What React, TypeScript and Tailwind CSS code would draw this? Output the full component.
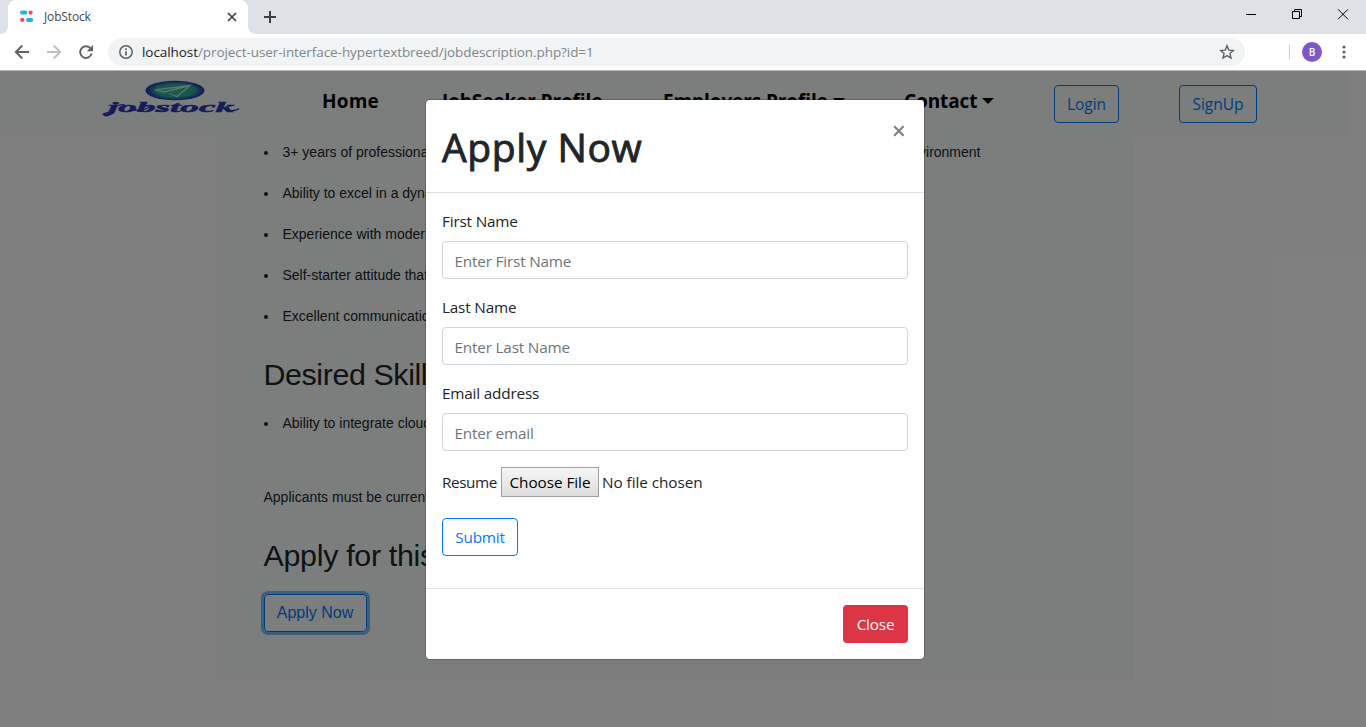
import React from "react";

const ui = "font-['Open_Sans','Noto_Sans',sans-serif]";

function TabStrip() {
  return (
    <div className="flex h-[34px] shrink-0 items-end bg-[#dee1e6]">
      <div className="h-[34px] w-2 bg-white">
        <div className="h-full w-full rounded-br-lg bg-[#dee1e6]" />
      </div>
      <div className="flex h-[34px] w-[240px] items-center rounded-t-lg bg-white pr-[10px] pl-3">
        <svg width="14" height="14" viewBox="0 0 14 14" className="mb-[3px]">
          <rect x="0" y="1.6" width="7.2" height="4" rx="1.8" fill="#17b8e8" />
          <circle cx="10.6" cy="3.6" r="2.1" fill="#ff4646" />
          <circle cx="2.3" cy="10.9" r="2.1" fill="#ff4646" />
          <rect x="6" y="8.9" width="7.2" height="4" rx="1.8" fill="#17b8e8" />
        </svg>
        <span className="ml-[10px] text-[12px] leading-4 tracking-[-0.15px] text-[#45494d]">JobStock</span>
        <svg width="12" height="12" viewBox="0 0 12 12" className="ml-auto" stroke="#3c4043" strokeWidth="1.7">
          <path d="M2 2l8 8M10 2l-8 8" />
        </svg>
      </div>
      <div className="h-[34px] w-2 bg-white">
        <div className="h-full w-full rounded-bl-lg bg-[#dee1e6]" />
      </div>
      <svg width="14" height="34" viewBox="0 0 14 34" className="ml-[7px]" stroke="#3c4043" strokeWidth="2">
        <path d="M1 17h12M7 11v12" />
      </svg>
      <svg width="104" height="34" viewBox="0 0 104 34" className="mr-[16px] ml-auto" fill="none" stroke="#000" strokeWidth="1">
        <path d="M0 14.5h10M46.5 11.5h7v7h-7zM48.5 11V9.5h7v7H54" />
        <path d="M92 9.3l10 10M102 9.3l-10 10" />
      </svg>
    </div>
  );
}

function Toolbar() {
  return (
    <div className="flex h-[37px] shrink-0 items-center border-b border-[#b5b4b4] bg-white pl-[14px]">
      <svg width="80" height="16" viewBox="0 0 80 16" fill="none" strokeWidth="1.9">
        <path d="M15 8H2M8.3 1.5L1.8 8l6.5 6.5" stroke="#5f6368" />
        <path d="M33 8h13M39.7 1.5L46.2 8l-6.5 6.5" stroke="#bdc1c6" />
        <path d="M76.3 4.2A5.8 5.8 0 1 0 77.6 9.6" stroke="#5f6368" />
        <path d="M79 1v6.2h-6.2z" fill="#5f6368" />
      </svg>
      <div className="ml-[14px] flex h-7 w-[1137px] items-center rounded-full bg-[#f1f3f4] pr-[10px] pl-[11px]">
        <svg width="14" height="14" viewBox="0 0 14 14" fill="none" stroke="#5f6368" strokeWidth="1.5">
          <circle cx="7" cy="7" r="6.2" />
          <path d="M7 6.2v4.3M7 3.3v1.6" strokeWidth="1.7" />
        </svg>
        <span className="ml-[9px] text-[13.5px] leading-5 tracking-[-0.07px] whitespace-pre text-[#80868b]">
          <span className="text-[#202124]">localhost</span>/project-user-interface-hypertextbreed/jobdescription.php?id=1
        </span>
        <svg width="16" height="16" viewBox="0 0 24 24" className="ml-auto" fill="none" stroke="#5f6368" strokeWidth="2.1">
          <path d="M12 2.8l2.7 6.4 6.9.6-5.2 4.5 1.6 6.8-6-3.6-6 3.6 1.6-6.8-5.2-4.5 6.9-.6z" />
        </svg>
      </div>
      <div className="ml-[44px] h-4 w-px bg-[#cfd1d4]" />
      <div className="ml-[12px] flex h-5 w-5 items-center justify-center rounded-full bg-[#7e57c2] text-[10px] font-semibold text-white">B</div>
      <svg width="4" height="14" viewBox="0 0 4 14" className="ml-[20px]" fill="#5f6368">
        <circle cx="2" cy="2" r="1.6" /><circle cx="2" cy="7" r="1.6" /><circle cx="2" cy="12" r="1.6" />
      </svg>
    </div>
  );
}

function Logo() {
  return (
    <svg width="140" height="42" viewBox="0 0 140 42" className="mr-[80px] mb-[6px] ml-[102px]">
      <defs>
        <radialGradient id="badge">
          <stop offset="0" stopColor="#38c090" />
          <stop offset="0.68" stopColor="#28a898" />
          <stop offset="0.88" stopColor="#2c50b0" />
          <stop offset="1" stopColor="#2834a8" />
        </radialGradient>
      </defs>
      <ellipse cx="73" cy="10.500" rx="29.5" ry="9.8" fill="url(#badge)" />
      <path d="M53 9.8L88 5.500 75 16.500l-7.500-3M88 5.500L62 12 53 9.800M67.500 13.500L75 16.500" fill="none" stroke="#c4e4dc" strokeWidth="1.3" />
      <text x="6" y="31.500" textLength="126" lengthAdjust="spacingAndGlyphs" fill="#2c38b4" stroke="#2c38b4" strokeWidth=".5" className="font-['Liberation_Serif',serif] text-[15px] italic">jobstock</text>
      <path d="M8 32q-6 1-6 3 2 1.800 7-.8M15 26q5-2 8-1M32 30q9 1.500 15-3M54 30.500q7 .5 12-2.500M127 30.500q6 1 10-2" fill="none" stroke="#2c38b4" strokeWidth="1.300" />
    </svg>
  );
}

function Caret() {
  return <span className="mt-[-1px] ml-[5px] h-0 w-0 border-x-[6px] border-t-[6px] border-x-transparent border-t-black" />;
}

function Navbar() {
  return (
    <nav className="flex h-[66px] w-[1349px] shrink-0 items-center bg-[#f8fcfa] text-[19px] leading-[30px] font-bold whitespace-nowrap text-black">
      <Logo />
      <span className="mb-[6px] w-[120px] tracking-[0.2px]">Home</span>
      <span className="mb-[6px] w-[221px] tracking-[-0.1px]">JobSeeker Profile</span>
      <span className="mb-[6px] flex w-[241px] items-center tracking-[-0.1px]">Employers Profile<Caret /></span>
      <span className="mb-[6px] flex w-[150px] items-center tracking-[-0.1px]">Contact<Caret /></span>
      <button className="h-[38px] w-[65px] rounded border border-[#007bff] text-[15.5px] leading-6 font-normal text-[#007bff]">Login</button>
      <button className="ml-[60px] h-[38px] w-[78px] rounded border border-[#007bff] text-[15.5px] leading-6 font-normal text-[#007bff]">SignUp</button>
    </nav>
  );
}

function Bullet({ children }: { children: React.ReactNode }) {
  return (
    <li className="flex h-[41px] items-center">
      <span className="mr-[15px] h-1 w-1 rounded-full bg-[#212529]" />
      <span className="flex w-[700px] justify-between whitespace-nowrap">{children}</span>
    </li>
  );
}

function JobDescription() {
  return (
    <main className="ml-[216px] flow-root h-[543px] w-[918px] bg-[#f8fcfa] pl-[47.5px] font-['Liberation_Sans',Arial,sans-serif] text-[14px] leading-[21px] text-[#212529]">
      <ul className="-mt-[5px]">
        <Bullet><span>3+ years of professional</span><span className="mr-[2px]">environment</span></Bullet>
        <Bullet>Ability to excel in a dyna</Bullet>
        <Bullet>Experience with modern</Bullet>
        <Bullet>Self-starter attitude that</Bullet>
        <Bullet>Excellent communicatio</Bullet>
      </ul>
      <h2 className="mt-[18px] text-[30.4px] leading-[38px] tracking-[-0.4px]">Desired Skills</h2>
      <ul className="mt-[10px]"><Bullet>Ability to integrate cloud</Bullet></ul>
      <p className="mt-[43px]">Applicants must be current</p>
      <h2 className="mt-[28px] text-[30.4px] leading-[38px] tracking-[-0.3px]">Apply for this</h2>
      <button className="mt-[20px] h-[38px] w-[103px] rounded border border-[#007bff] text-[16px] leading-6 text-[#007bff] shadow-[0_0_0_3px_rgba(0,123,255,0.5)]">Apply Now</button>
    </main>
  );
}

function Field({ label, placeholder }: { label: string; placeholder: string }) {
  return (
    <div className="mb-4">
      <label className="mb-2 block">{label}</label>
      <input placeholder={placeholder} className="block h-[38px] w-full rounded border border-[#ced4da] px-[11.5px] pt-[2px] placeholder:text-[#6c757d] placeholder:opacity-100" />
    </div>
  );
}

function ApplyModal() {
  return (
    <div className="absolute top-[28px] left-[425px] w-[500px] rounded-[5px] border border-black/20 bg-white bg-clip-padding text-[15.3px] leading-6 tracking-[-0.18px] text-[#212529]">
      <div className="flex h-[93px] items-start justify-between border-b border-[#dee2e6] p-4">
        <h1 className="text-[39px] leading-[62px] font-normal tracking-[0.6px] [-webkit-text-stroke:0.9px_#212529]">Apply Now</h1>
        <svg width="12" height="12" viewBox="0 0 12 12" className="mt-[9px] mr-[3px]" stroke="#808080" strokeWidth="2.2">
          <path d="M1.2 1.2l9.4 9.6M10.6 1.2L1.2 10.8" />
        </svg>
      </div>
      <div className="h-[395px] p-4">
        <Field label="First Name" placeholder="Enter First Name" />
        <Field label="Last Name" placeholder="Enter Last Name" />
        <Field label="Email address" placeholder="Enter email" />
        <div className="flex h-[30px] items-center tracking-[-0.05px] whitespace-nowrap">
          <span className="w-[59px] tracking-[-0.4px]">Resume</span>
          <button className="h-[30px] w-[98px] border border-[#a0a0a0] bg-linear-to-b from-[#f6f6f6] to-[#dddddd] text-black">Choose File</button>
          <span className="ml-[3px]">No file chosen</span>
        </div>
        <button className="mt-[21px] h-[38px] w-[76px] rounded border border-[#007bff] text-[#007bff]">Submit</button>
      </div>
      <div className="flex h-[71px] justify-end border-t border-[#dee2e6] p-4">
        <button className="h-[38px] w-[65px] rounded bg-[#dc3545] text-white">Close</button>
      </div>
    </div>
  );
}

export default function App() {
  return (
    <div className={`flex h-[727px] w-[1366px] flex-col overflow-hidden bg-white ${ui}`}>
      <TabStrip />
      <Toolbar />
      <div className="relative flex-1 overflow-hidden">
        <Navbar />
        <JobDescription />
        <div className="absolute inset-0 bg-black/50" />
        <ApplyModal />
      </div>
    </div>
  );
}
